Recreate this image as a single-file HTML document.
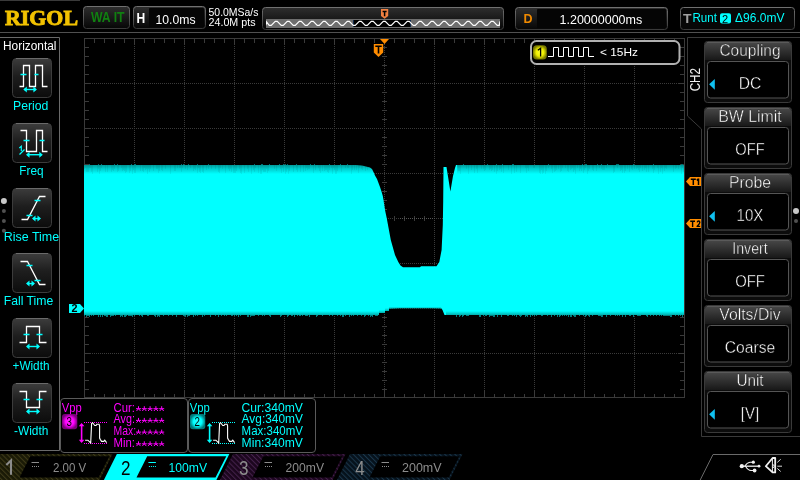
<!DOCTYPE html>
<html><head><meta charset="utf-8"><title>Rigol</title>
<style>
html,body{margin:0;padding:0;background:#000;}
body{width:800px;height:480px;overflow:hidden;position:relative;font-family:"Liberation Sans", sans-serif;}
svg{position:absolute;left:0;top:0;will-change:transform;}

</style></head><body>
<svg width="800" height="480" viewBox="0 0 800 480" font-family="Liberation Sans, sans-serif">
<defs>
<linearGradient id="btn" x1="0" y1="0" x2="0" y2="1">
<stop offset="0" stop-color="#3c3c3c"/><stop offset="0.45" stop-color="#1e1e1e"/><stop offset="1" stop-color="#0c0c0c"/></linearGradient>
<linearGradient id="mtitle" x1="0" y1="0" x2="0" y2="1">
<stop offset="0" stop-color="#484848"/><stop offset="1" stop-color="#181818"/></linearGradient>
<linearGradient id="topbox" x1="0" y1="0" x2="0" y2="1">
<stop offset="0" stop-color="#2e2e2e"/><stop offset="1" stop-color="#060606"/></linearGradient>
<linearGradient id="band" x1="0" y1="0" x2="0" y2="1">
<stop offset="0" stop-color="#000" stop-opacity="0.38"/><stop offset="0.4" stop-color="#000" stop-opacity="0.2"/><stop offset="1" stop-color="#000" stop-opacity="0"/></linearGradient>
<linearGradient id="bandb" x1="0" y1="1" x2="0" y2="0">
<stop offset="0" stop-color="#000" stop-opacity="0.32"/><stop offset="1" stop-color="#000" stop-opacity="0"/></linearGradient>
<pattern id="hatch1" width="3.6" height="3.6" patternUnits="userSpaceOnUse" patternTransform="rotate(-45)">
<rect width="3.6" height="3.6" fill="#1a1a06"/><rect width="1" height="3.6" fill="#403c1a"/></pattern>
<pattern id="hatch3" width="3.6" height="3.6" patternUnits="userSpaceOnUse" patternTransform="rotate(-45)">
<rect width="3.6" height="3.6" fill="#1c061e"/><rect width="1" height="3.6" fill="#44224c"/></pattern>
<pattern id="hatch4" width="3.6" height="3.6" patternUnits="userSpaceOnUse" patternTransform="rotate(-45)">
<rect width="3.6" height="3.6" fill="#06121c"/><rect width="1" height="3.6" fill="#1a364a"/></pattern>
<radialGradient id="rgm"><stop offset="0" stop-color="#ff30ff"/><stop offset="0.55" stop-color="#ff00ff"/><stop offset="1" stop-color="#7a007a"/></radialGradient>
<radialGradient id="rgc"><stop offset="0" stop-color="#30ffff"/><stop offset="0.55" stop-color="#00ffff"/><stop offset="1" stop-color="#007a7a"/></radialGradient>
<radialGradient id="rgy"><stop offset="0" stop-color="#ffff30"/><stop offset="0.55" stop-color="#f0f000"/><stop offset="1" stop-color="#7a7a00"/></radialGradient>
<filter id="glow" x="-50%" y="-50%" width="200%" height="200%"><feGaussianBlur stdDeviation="1.6"/></filter>
<linearGradient id="bord" x1="0" y1="0" x2="0" y2="1">
<stop offset="0" stop-color="#707070"/><stop offset="1" stop-color="#3a3a3a"/></linearGradient>
</defs>

<line x1="134.5" y1="40" x2="134.5" y2="397" stroke="#3a3a3a" stroke-width="1" stroke-dasharray="1 1"/>
<line x1="184.5" y1="40" x2="184.5" y2="397" stroke="#3a3a3a" stroke-width="1" stroke-dasharray="1 1"/>
<line x1="234.5" y1="40" x2="234.5" y2="397" stroke="#3a3a3a" stroke-width="1" stroke-dasharray="1 1"/>
<line x1="284.5" y1="40" x2="284.5" y2="397" stroke="#3a3a3a" stroke-width="1" stroke-dasharray="1 1"/>
<line x1="334.5" y1="40" x2="334.5" y2="397" stroke="#3a3a3a" stroke-width="1" stroke-dasharray="1 1"/>
<line x1="434.5" y1="40" x2="434.5" y2="397" stroke="#3a3a3a" stroke-width="1" stroke-dasharray="1 1"/>
<line x1="484.5" y1="40" x2="484.5" y2="397" stroke="#3a3a3a" stroke-width="1" stroke-dasharray="1 1"/>
<line x1="534.5" y1="40" x2="534.5" y2="397" stroke="#3a3a3a" stroke-width="1" stroke-dasharray="1 1"/>
<line x1="584.5" y1="40" x2="584.5" y2="397" stroke="#3a3a3a" stroke-width="1" stroke-dasharray="1 1"/>
<line x1="634.5" y1="40" x2="634.5" y2="397" stroke="#3a3a3a" stroke-width="1" stroke-dasharray="1 1"/>
<line x1="86" y1="83.5" x2="684" y2="83.5" stroke="#3a3a3a" stroke-width="1" stroke-dasharray="1 1"/>
<line x1="86" y1="128.5" x2="684" y2="128.5" stroke="#3a3a3a" stroke-width="1" stroke-dasharray="1 1"/>
<line x1="86" y1="173.5" x2="684" y2="173.5" stroke="#3a3a3a" stroke-width="1" stroke-dasharray="1 1"/>
<line x1="86" y1="263.5" x2="684" y2="263.5" stroke="#3a3a3a" stroke-width="1" stroke-dasharray="1 1"/>
<line x1="86" y1="308.5" x2="684" y2="308.5" stroke="#3a3a3a" stroke-width="1" stroke-dasharray="1 1"/>
<line x1="86" y1="353.5" x2="684" y2="353.5" stroke="#3a3a3a" stroke-width="1" stroke-dasharray="1 1"/>
<line x1="384.5" y1="40" x2="384.5" y2="397" stroke="#3a3a3a" stroke-width="1" stroke-dasharray="1 1"/>
<line x1="86" y1="218.5" x2="684" y2="218.5" stroke="#3a3a3a" stroke-width="1" stroke-dasharray="1 1"/>
<path d="M94.5 39V43M94.5 397V394M94.5 216V221M104.5 39V43M104.5 397V394M104.5 216V221M114.5 39V43M114.5 397V394M114.5 216V221M124.5 39V43M124.5 397V394M124.5 216V221M144.5 39V43M144.5 397V394M144.5 216V221M154.5 39V43M154.5 397V394M154.5 216V221M164.5 39V43M164.5 397V394M164.5 216V221M174.5 39V43M174.5 397V394M174.5 216V221M194.5 39V43M194.5 397V394M194.5 216V221M204.5 39V43M204.5 397V394M204.5 216V221M214.5 39V43M214.5 397V394M214.5 216V221M224.5 39V43M224.5 397V394M224.5 216V221M244.5 39V43M244.5 397V394M244.5 216V221M254.5 39V43M254.5 397V394M254.5 216V221M264.5 39V43M264.5 397V394M264.5 216V221M274.5 39V43M274.5 397V394M274.5 216V221M294.5 39V43M294.5 397V394M294.5 216V221M304.5 39V43M304.5 397V394M304.5 216V221M314.5 39V43M314.5 397V394M314.5 216V221M324.5 39V43M324.5 397V394M324.5 216V221M344.5 39V43M344.5 397V394M344.5 216V221M354.5 39V43M354.5 397V394M354.5 216V221M364.5 39V43M364.5 397V394M364.5 216V221M374.5 39V43M374.5 397V394M374.5 216V221M394.5 39V43M394.5 397V394M394.5 216V221M404.5 39V43M404.5 397V394M404.5 216V221M414.5 39V43M414.5 397V394M414.5 216V221M424.5 39V43M424.5 397V394M424.5 216V221M444.5 39V43M444.5 397V394M444.5 216V221M454.5 39V43M454.5 397V394M454.5 216V221M464.5 39V43M464.5 397V394M464.5 216V221M474.5 39V43M474.5 397V394M474.5 216V221M494.5 39V43M494.5 397V394M494.5 216V221M504.5 39V43M504.5 397V394M504.5 216V221M514.5 39V43M514.5 397V394M514.5 216V221M524.5 39V43M524.5 397V394M524.5 216V221M544.5 39V43M544.5 397V394M544.5 216V221M554.5 39V43M554.5 397V394M554.5 216V221M564.5 39V43M564.5 397V394M564.5 216V221M574.5 39V43M574.5 397V394M574.5 216V221M594.5 39V43M594.5 397V394M594.5 216V221M604.5 39V43M604.5 397V394M604.5 216V221M614.5 39V43M614.5 397V394M614.5 216V221M624.5 39V43M624.5 397V394M624.5 216V221M644.5 39V43M644.5 397V394M644.5 216V221M654.5 39V43M654.5 397V394M654.5 216V221M664.5 39V43M664.5 397V394M664.5 216V221M674.5 39V43M674.5 397V394M674.5 216V221M85 47.5H89M684 47.5H680M382 47.5H387M85 56.5H89M684 56.5H680M382 56.5H387M85 65.5H89M684 65.5H680M382 65.5H387M85 74.5H89M684 74.5H680M382 74.5H387M85 92.5H89M684 92.5H680M382 92.5H387M85 101.5H89M684 101.5H680M382 101.5H387M85 110.5H89M684 110.5H680M382 110.5H387M85 119.5H89M684 119.5H680M382 119.5H387M85 137.5H89M684 137.5H680M382 137.5H387M85 146.5H89M684 146.5H680M382 146.5H387M85 155.5H89M684 155.5H680M382 155.5H387M85 164.5H89M684 164.5H680M382 164.5H387M85 182.5H89M684 182.5H680M382 182.5H387M85 191.5H89M684 191.5H680M382 191.5H387M85 200.5H89M684 200.5H680M382 200.5H387M85 209.5H89M684 209.5H680M382 209.5H387M85 227.5H89M684 227.5H680M382 227.5H387M85 236.5H89M684 236.5H680M382 236.5H387M85 245.5H89M684 245.5H680M382 245.5H387M85 254.5H89M684 254.5H680M382 254.5H387M85 272.5H89M684 272.5H680M382 272.5H387M85 281.5H89M684 281.5H680M382 281.5H387M85 290.5H89M684 290.5H680M382 290.5H387M85 299.5H89M684 299.5H680M382 299.5H387M85 317.5H89M684 317.5H680M382 317.5H387M85 326.5H89M684 326.5H680M382 326.5H387M85 335.5H89M684 335.5H680M382 335.5H387M85 344.5H89M684 344.5H680M382 344.5H387M85 362.5H89M684 362.5H680M382 362.5H387M85 371.5H89M684 371.5H680M382 371.5H387M85 380.5H89M684 380.5H680M382 380.5H387M85 389.5H89M684 389.5H680M382 389.5H387M134.5 39V45M134.5 397V391M184.5 39V45M184.5 397V391M234.5 39V45M234.5 397V391M284.5 39V45M284.5 397V391M334.5 39V45M334.5 397V391M384.5 39V45M384.5 397V391M434.5 39V45M434.5 397V391M484.5 39V45M484.5 397V391M534.5 39V45M534.5 397V391M584.5 39V45M584.5 397V391M634.5 39V45M634.5 397V391M85 83.5H91M684 83.5H678M85 128.5H91M684 128.5H678M85 173.5H91M684 173.5H678M85 218.5H91M684 218.5H678M85 263.5H91M684 263.5H678M85 308.5H91M684 308.5H678M85 353.5H91M684 353.5H678" stroke="#3a3a3a" stroke-width="1" fill="none"/>
<rect x="84.5" y="38.5" width="600" height="359" fill="none" stroke="#3a3a3a" stroke-width="1"/>
<path d="M84 165 L356 165 L362 165.5 L366 166.5 L370 167.5 L372 169 L373.5 172 L375 175.5 L377 179 L378.5 183 L380 187 L381.5 191.5 L382.8 196 L383.5 200 L385 210 L386.7 218 L390.8 240 L395 255 L398.3 262 L400.5 265.5 L403 267.3 L420 267.3 L421 266.2 L436.5 266.2 L439.3 262 L441.6 250 L442.8 225 L443.2 201 L443.5 167 L446.5 167 L450.4 191.5 L452 182 L453 176 L455 168 L456 165 L684 165 L684 315 L444.5 315 L442.5 310 L441.5 308.4 L430 308.2 L400 308.2 L389 308.8 L389 311 L385 311 L385 313 L379 313 L379 315 L84 315Z" fill="#00ffff"/>
<rect x="84" y="165" width="290" height="9" fill="url(#band)"/>
<rect x="457" y="165" width="227" height="9" fill="url(#band)"/>
<path d="M84 165h1v4h-1zM85 165h1v3h-1zM86 165h1v7h-1zM87 165h1v7h-1zM88 165h1v7h-1zM89 165h1v3h-1zM90 165h1v3h-1zM91 165h1v7h-1zM92 165h1v9h-1zM97 165h1v7h-1zM98 165h1v4h-1zM99 165h1v9h-1zM100 165h1v6h-1zM101 165h1v3h-1zM105 165h1v7h-1zM107 165h1v7h-1zM111 165h1v7h-1zM112 165h1v5h-1zM113 165h1v6h-1zM114 165h1v4h-1zM117 165h1v7h-1zM118 165h1v6h-1zM121 165h1v3h-1zM122 165h1v6h-1zM123 165h1v5h-1zM124 165h1v6h-1zM125 165h1v8h-1zM126 165h1v7h-1zM129 165h1v8h-1zM130 165h1v6h-1zM132 165h1v9h-1zM133 165h1v5h-1zM134 165h1v8h-1zM135 165h1v8h-1zM140 165h1v6h-1zM142 165h1v6h-1zM143 165h1v7h-1zM144 165h1v3h-1zM145 165h1v5h-1zM146 165h1v4h-1zM147 165h1v9h-1zM148 165h1v4h-1zM149 165h1v7h-1zM150 165h1v4h-1zM153 165h1v6h-1zM156 165h1v4h-1zM157 165h1v4h-1zM158 165h1v8h-1zM159 165h1v6h-1zM161 165h1v5h-1zM162 165h1v6h-1zM165 165h1v4h-1zM170 165h1v9h-1zM174 165h1v6h-1zM175 165h1v6h-1zM177 165h1v3h-1zM179 165h1v3h-1zM180 165h1v3h-1zM181 165h1v7h-1zM182 165h1v3h-1zM185 165h1v4h-1zM187 165h1v5h-1zM190 165h1v3h-1zM193 165h1v6h-1zM194 165h1v4h-1zM195 165h1v5h-1zM197 165h1v8h-1zM198 165h1v3h-1zM199 165h1v7h-1zM200 165h1v8h-1zM202 165h1v7h-1zM203 165h1v8h-1zM206 165h1v5h-1zM208 165h1v4h-1zM211 165h1v4h-1zM215 165h1v4h-1zM218 165h1v7h-1zM219 165h1v8h-1zM220 165h1v3h-1zM222 165h1v4h-1zM225 165h1v8h-1zM228 165h1v4h-1zM229 165h1v6h-1zM230 165h1v4h-1zM231 165h1v7h-1zM233 165h1v8h-1zM234 165h1v8h-1zM235 165h1v8h-1zM236 165h1v6h-1zM239 165h1v4h-1zM240 165h1v8h-1zM241 165h1v9h-1zM244 165h1v8h-1zM247 165h1v4h-1zM248 165h1v7h-1zM251 165h1v9h-1zM253 165h1v5h-1zM254 165h1v7h-1zM255 165h1v3h-1zM258 165h1v8h-1zM260 165h1v9h-1zM261 165h1v9h-1zM262 165h1v5h-1zM263 165h1v7h-1zM264 165h1v7h-1zM265 165h1v7h-1zM266 165h1v4h-1zM267 165h1v8h-1zM268 165h1v6h-1zM274 165h1v4h-1zM276 165h1v6h-1zM280 165h1v4h-1zM281 165h1v8h-1zM282 165h1v3h-1zM283 165h1v7h-1zM285 165h1v9h-1zM286 165h1v7h-1zM287 165h1v4h-1zM288 165h1v9h-1zM289 165h1v6h-1zM293 165h1v7h-1zM296 165h1v5h-1zM297 165h1v7h-1zM300 165h1v7h-1zM303 165h1v7h-1zM305 165h1v6h-1zM306 165h1v3h-1zM307 165h1v5h-1zM308 165h1v4h-1zM309 165h1v4h-1zM313 165h1v8h-1zM315 165h1v5h-1zM318 165h1v3h-1zM319 165h1v6h-1zM320 165h1v8h-1zM322 165h1v6h-1zM324 165h1v6h-1zM325 165h1v5h-1zM326 165h1v5h-1zM327 165h1v7h-1zM328 165h1v8h-1zM329 165h1v5h-1zM331 165h1v3h-1zM332 165h1v9h-1zM333 165h1v3h-1zM334 165h1v5h-1zM335 165h1v9h-1zM336 165h1v9h-1zM337 165h1v6h-1zM341 165h1v7h-1zM345 165h1v3h-1zM347 165h1v3h-1zM348 165h1v3h-1zM351 165h1v9h-1zM352 165h1v5h-1zM354 165h1v5h-1zM356 165h1v5h-1zM358 165h1v8h-1zM359 165h1v3h-1zM361 165h1v4h-1zM362 165h1v5h-1zM365 165h1v6h-1zM367 165h1v5h-1zM370 165h1v3h-1zM458 165h1v6h-1zM459 165h1v6h-1zM460 165h1v9h-1zM466 165h1v4h-1zM468 165h1v9h-1zM471 165h1v5h-1zM474 165h1v8h-1zM476 165h1v4h-1zM477 165h1v8h-1zM481 165h1v4h-1zM483 165h1v4h-1zM484 165h1v6h-1zM485 165h1v5h-1zM489 165h1v5h-1zM490 165h1v4h-1zM491 165h1v6h-1zM492 165h1v5h-1zM494 165h1v7h-1zM496 165h1v9h-1zM497 165h1v6h-1zM499 165h1v5h-1zM500 165h1v4h-1zM501 165h1v7h-1zM503 165h1v8h-1zM508 165h1v5h-1zM511 165h1v9h-1zM514 165h1v8h-1zM516 165h1v7h-1zM520 165h1v8h-1zM525 165h1v3h-1zM526 165h1v8h-1zM527 165h1v3h-1zM528 165h1v6h-1zM533 165h1v3h-1zM534 165h1v3h-1zM539 165h1v8h-1zM540 165h1v9h-1zM541 165h1v5h-1zM542 165h1v9h-1zM543 165h1v8h-1zM545 165h1v9h-1zM546 165h1v6h-1zM548 165h1v3h-1zM551 165h1v4h-1zM552 165h1v8h-1zM554 165h1v7h-1zM555 165h1v6h-1zM556 165h1v5h-1zM558 165h1v4h-1zM560 165h1v7h-1zM561 165h1v6h-1zM562 165h1v3h-1zM565 165h1v3h-1zM567 165h1v6h-1zM568 165h1v7h-1zM570 165h1v5h-1zM571 165h1v4h-1zM572 165h1v3h-1zM573 165h1v7h-1zM574 165h1v5h-1zM575 165h1v9h-1zM577 165h1v3h-1zM579 165h1v6h-1zM580 165h1v4h-1zM581 165h1v6h-1zM583 165h1v8h-1zM584 165h1v5h-1zM585 165h1v3h-1zM587 165h1v9h-1zM588 165h1v6h-1zM589 165h1v4h-1zM592 165h1v5h-1zM593 165h1v6h-1zM596 165h1v6h-1zM599 165h1v3h-1zM601 165h1v4h-1zM602 165h1v5h-1zM603 165h1v5h-1zM604 165h1v5h-1zM606 165h1v3h-1zM613 165h1v8h-1zM614 165h1v7h-1zM617 165h1v3h-1zM620 165h1v6h-1zM621 165h1v5h-1zM622 165h1v8h-1zM624 165h1v8h-1zM625 165h1v6h-1zM627 165h1v4h-1zM629 165h1v7h-1zM631 165h1v4h-1zM632 165h1v5h-1zM634 165h1v4h-1zM636 165h1v4h-1zM637 165h1v3h-1zM638 165h1v5h-1zM639 165h1v7h-1zM640 165h1v3h-1zM642 165h1v6h-1zM644 165h1v5h-1zM645 165h1v3h-1zM646 165h1v7h-1zM648 165h1v7h-1zM652 165h1v4h-1zM653 165h1v8h-1zM654 165h1v5h-1zM657 165h1v3h-1zM658 165h1v9h-1zM660 165h1v7h-1zM661 165h1v3h-1zM662 165h1v9h-1zM664 165h1v6h-1zM665 165h1v3h-1zM666 165h1v4h-1zM673 165h1v7h-1zM675 165h1v4h-1zM676 165h1v3h-1zM678 165h1v4h-1zM681 165h1v9h-1zM682 165h1v3h-1zM683 165h1v7h-1z" fill="#000" fill-opacity="0.06"/>
<path d="M89 164h1v1h-1zM98 164h1v1h-1zM101 164h1v1h-1zM114 164h1v1h-1zM117 164h1v1h-1zM131 164h1v1h-1zM134 164h1v1h-1zM135 164h1v1h-1zM181 164h1v1h-1zM183 164h1v1h-1zM188 164h1v1h-1zM197 164h1v1h-1zM208 164h1v1h-1zM254 164h1v1h-1zM261 164h1v1h-1zM262 164h1v1h-1zM269 164h1v1h-1zM279 164h1v1h-1zM283 164h1v1h-1zM285 164h1v1h-1zM287 164h1v1h-1zM296 164h1v1h-1zM310 164h1v1h-1zM314 164h1v1h-1zM329 164h1v1h-1zM340 164h1v1h-1zM347 164h1v1h-1zM463 164h1v1h-1zM487 164h1v1h-1zM496 164h1v1h-1zM502 164h1v1h-1zM512 164h1v1h-1zM513 164h1v1h-1zM548 164h1v1h-1zM582 164h1v1h-1zM585 164h1v1h-1zM586 164h1v1h-1zM597 164h1v1h-1zM601 164h1v1h-1zM607 164h1v1h-1zM616 164h1v1h-1zM617 164h1v1h-1zM618 164h1v1h-1zM633 164h1v1h-1zM653 164h1v1h-1zM681 164h1v1h-1zM682 164h1v1h-1z" fill="#007070"/>
<path d="M84 315h1v1h-1zM86 315h1v2h-1zM87 315h1v1h-1zM88 315h1v1h-1zM89 315h1v2h-1zM91 315h1v1h-1zM93 315h1v1h-1zM98 315h1v2h-1zM100 315h1v2h-1zM102 315h1v2h-1zM104 315h1v1h-1zM105 315h1v1h-1zM106 315h1v2h-1zM107 315h1v2h-1zM110 315h1v2h-1zM111 315h1v1h-1zM112 315h1v1h-1zM113 315h1v1h-1zM115 315h1v1h-1zM120 315h1v2h-1zM121 315h1v1h-1zM122 315h1v2h-1zM124 315h1v2h-1zM125 315h1v2h-1zM126 315h1v1h-1zM128 315h1v1h-1zM129 315h1v1h-1zM130 315h1v1h-1zM131 315h1v1h-1zM132 315h1v2h-1zM134 315h1v1h-1zM139 315h1v1h-1zM141 315h1v1h-1zM142 315h1v2h-1zM147 315h1v1h-1zM148 315h1v1h-1zM154 315h1v1h-1zM155 315h1v2h-1zM157 315h1v2h-1zM158 315h1v1h-1zM159 315h1v2h-1zM163 315h1v1h-1zM168 315h1v1h-1zM172 315h1v1h-1zM176 315h1v2h-1zM183 315h1v1h-1zM184 315h1v1h-1zM185 315h1v2h-1zM187 315h1v2h-1zM188 315h1v1h-1zM189 315h1v1h-1zM193 315h1v2h-1zM195 315h1v1h-1zM197 315h1v1h-1zM202 315h1v2h-1zM204 315h1v1h-1zM210 315h1v2h-1zM215 315h1v1h-1zM218 315h1v2h-1zM221 315h1v1h-1zM224 315h1v1h-1zM226 315h1v1h-1zM231 315h1v1h-1zM232 315h1v1h-1zM234 315h1v1h-1zM236 315h1v1h-1zM238 315h1v2h-1zM240 315h1v1h-1zM247 315h1v2h-1zM248 315h1v2h-1zM250 315h1v2h-1zM251 315h1v1h-1zM252 315h1v1h-1zM253 315h1v1h-1zM254 315h1v1h-1zM258 315h1v1h-1zM262 315h1v1h-1zM264 315h1v1h-1zM269 315h1v1h-1zM270 315h1v2h-1zM280 315h1v2h-1zM281 315h1v1h-1zM287 315h1v2h-1zM288 315h1v1h-1zM291 315h1v1h-1zM292 315h1v1h-1zM294 315h1v2h-1zM297 315h1v1h-1zM299 315h1v1h-1zM300 315h1v1h-1zM302 315h1v1h-1zM305 315h1v1h-1zM306 315h1v1h-1zM307 315h1v1h-1zM309 315h1v2h-1zM316 315h1v2h-1zM317 315h1v1h-1zM322 315h1v1h-1zM329 315h1v1h-1zM332 315h1v1h-1zM337 315h1v1h-1zM340 315h1v1h-1zM342 315h1v2h-1zM343 315h1v2h-1zM345 315h1v1h-1zM349 315h1v2h-1zM351 315h1v1h-1zM353 315h1v1h-1zM357 315h1v1h-1zM361 315h1v1h-1zM364 315h1v2h-1zM365 315h1v1h-1zM368 315h1v1h-1zM370 315h1v2h-1zM371 315h1v1h-1zM372 315h1v2h-1zM375 315h1v1h-1zM376 315h1v1h-1zM377 315h1v1h-1zM456 315h1v2h-1zM459 315h1v2h-1zM460 315h1v1h-1zM462 315h1v2h-1zM463 315h1v1h-1zM466 315h1v1h-1zM467 315h1v1h-1zM468 315h1v1h-1zM479 315h1v2h-1zM480 315h1v2h-1zM483 315h1v1h-1zM485 315h1v1h-1zM486 315h1v1h-1zM489 315h1v2h-1zM490 315h1v1h-1zM491 315h1v1h-1zM492 315h1v1h-1zM493 315h1v2h-1zM494 315h1v2h-1zM497 315h1v2h-1zM501 315h1v2h-1zM507 315h1v1h-1zM508 315h1v1h-1zM512 315h1v1h-1zM514 315h1v1h-1zM516 315h1v2h-1zM519 315h1v1h-1zM520 315h1v2h-1zM521 315h1v1h-1zM525 315h1v2h-1zM526 315h1v1h-1zM527 315h1v2h-1zM530 315h1v2h-1zM532 315h1v1h-1zM534 315h1v1h-1zM536 315h1v1h-1zM541 315h1v1h-1zM542 315h1v1h-1zM547 315h1v1h-1zM551 315h1v2h-1zM554 315h1v1h-1zM557 315h1v2h-1zM559 315h1v2h-1zM560 315h1v1h-1zM562 315h1v1h-1zM564 315h1v1h-1zM566 315h1v1h-1zM568 315h1v2h-1zM570 315h1v2h-1zM571 315h1v2h-1zM573 315h1v1h-1zM574 315h1v2h-1zM575 315h1v2h-1zM579 315h1v1h-1zM583 315h1v1h-1zM585 315h1v2h-1zM586 315h1v1h-1zM588 315h1v1h-1zM589 315h1v2h-1zM592 315h1v1h-1zM598 315h1v1h-1zM599 315h1v1h-1zM600 315h1v1h-1zM601 315h1v2h-1zM602 315h1v2h-1zM606 315h1v2h-1zM610 315h1v1h-1zM615 315h1v1h-1zM617 315h1v1h-1zM619 315h1v1h-1zM622 315h1v2h-1zM625 315h1v2h-1zM629 315h1v1h-1zM630 315h1v1h-1zM633 315h1v2h-1zM637 315h1v1h-1zM638 315h1v1h-1zM639 315h1v1h-1zM640 315h1v1h-1zM646 315h1v1h-1zM647 315h1v2h-1zM650 315h1v1h-1zM653 315h1v1h-1zM656 315h1v1h-1zM659 315h1v1h-1zM661 315h1v1h-1zM663 315h1v1h-1zM664 315h1v1h-1zM665 315h1v1h-1zM666 315h1v1h-1zM667 315h1v1h-1zM668 315h1v1h-1zM669 315h1v1h-1zM670 315h1v2h-1zM671 315h1v2h-1zM675 315h1v1h-1zM678 315h1v1h-1zM680 315h1v1h-1zM682 315h1v2h-1z" fill="#008080"/>
<rect x="84" y="311" width="295" height="4" fill="url(#bandb)"/>
<rect x="379" y="310" width="6" height="3" fill="url(#bandb)"/><rect x="385" y="308" width="4" height="3" fill="url(#bandb)"/><rect x="389" y="306.5" width="52" height="2.3" fill="url(#bandb)"/>
<rect x="446" y="311" width="238" height="4" fill="url(#bandb)"/>
<line x1="400" y1="218.5" x2="436" y2="218.5" stroke="#555" stroke-dasharray="1 1"/>
<line x1="0" y1="32.5" x2="800" y2="32.5" stroke="#505050" stroke-width="1"/>
<line x1="0" y1="0.5" x2="80" y2="0.5" stroke="#3a3a3a" stroke-width="1"/>
<text x="5" y="25" font-family="Liberation Serif" font-weight="bold" font-size="22" fill="#f2c200" stroke="#f2c200" stroke-width="0.9" textLength="73" lengthAdjust="spacingAndGlyphs">RIGOL</text>
<rect x="83.5" y="6.5" width="46" height="22" rx="3" fill="url(#topbox)" stroke="url(#bord)"/>
<text x="91" y="22.4" font-weight="bold" font-size="14.5" fill="#108010" textLength="33.5" lengthAdjust="spacingAndGlyphs">WA IT</text>
<rect x="133.5" y="6.5" width="72" height="22" rx="3" fill="url(#topbox)" stroke="url(#bord)"/>
<rect x="149" y="8" width="55" height="19" rx="1" fill="#050505"/>
<text x="136.5" y="22.9" font-weight="bold" font-size="14.3" fill="#fff" textLength="8.7" lengthAdjust="spacingAndGlyphs">H</text>
<text x="155.5" y="24" font-size="12.5" fill="#fff" textLength="40" lengthAdjust="spacingAndGlyphs">10.0ms</text>
<text x="208.5" y="15.8" font-size="10.5" fill="#fff" textLength="50" lengthAdjust="spacingAndGlyphs">50.0MSa/s</text>
<text x="208.5" y="26.2" font-size="10.5" fill="#fff" textLength="47" lengthAdjust="spacingAndGlyphs">24.0M pts</text>
<rect x="262.5" y="7.5" width="241" height="22" rx="3" fill="url(#topbox)" stroke="url(#bord)"/>
<rect x="266" y="19" width="234" height="9" fill="#6e6e6e"/>
<rect x="353" y="20" width="58" height="7" fill="#000"/>
<path d="M353.5 20V27M410.5 20V27" stroke="#102848" stroke-width="1"/>
<svg x="266" y="19" width="234" height="9" viewBox="266 19 234 9"><polyline points="266.00,25.3 266.00,25.3 266.00,21.3 266.00,21.3 269.25,25.3 271.25,25.3 275.25,21.3 277.25,21.3 281.25,25.3 283.25,25.3 287.25,21.3 289.25,21.3 293.25,25.3 295.25,25.3 299.25,21.3 301.25,21.3 305.25,25.3 307.25,25.3 311.25,21.3 313.25,21.3 317.25,25.3 319.25,25.3 323.25,21.3 325.25,21.3 329.25,25.3 331.25,25.3 335.25,21.3 337.25,21.3 341.25,25.3 343.25,25.3 347.25,21.3 349.25,21.3 353.25,25.3 355.25,25.3 359.25,21.3 361.25,21.3 365.25,25.3 367.25,25.3 371.25,21.3 373.25,21.3 377.25,25.3 379.25,25.3 383.25,21.3 385.25,21.3 389.25,25.3 391.25,25.3 395.25,21.3 397.25,21.3 401.25,25.3 403.25,25.3 407.25,21.3 409.25,21.3 413.25,25.3 415.25,25.3 419.25,21.3 421.25,21.3 425.25,25.3 427.25,25.3 431.25,21.3 433.25,21.3 437.25,25.3 439.25,25.3 443.25,21.3 445.25,21.3 449.25,25.3 451.25,25.3 455.25,21.3 457.25,21.3 461.25,25.3 463.25,25.3 467.25,21.3 469.25,21.3 473.25,25.3 475.25,25.3 479.25,21.3 481.25,21.3 485.25,25.3 487.25,25.3 491.25,21.3 493.25,21.3 497.25,25.3 499.25,25.3 500.00,21.3 500.00,21.3 500.00,25.3 500.00,25.3 500.00,21.3 500.00,21.3" fill="none" stroke="#fff" stroke-width="1.2"/></svg>
<path d="M381 9H388.2V16L384.6 18.8L381 16Z" fill="#f08040"/>
<path d="M382.6 11.6H386.6M384.6 11.6V16.3" stroke="#000" stroke-width="1.5"/>
<rect x="515.5" y="7.5" width="152" height="22" rx="3" fill="url(#topbox)" stroke="url(#bord)"/>
<rect x="537" y="9" width="129" height="19" rx="1" fill="#050505"/>
<text x="523.5" y="22.5" font-weight="bold" font-size="12.5" fill="#f08a00">D</text>
<text x="559.5" y="23.5" font-size="12.5" fill="#fff" textLength="82.7" lengthAdjust="spacingAndGlyphs">1.20000000ms</text>
<rect x="680.5" y="7.5" width="114" height="22" rx="3" fill="#070707" stroke="url(#bord)"/>
<text x="683" y="22.6" font-weight="bold" font-size="13.5" fill="#a0a0a0" textLength="8.5" lengthAdjust="spacingAndGlyphs">T</text>
<text x="692.5" y="22" font-size="12" fill="#00ffff" textLength="24.5" lengthAdjust="spacingAndGlyphs">Runt</text>
<rect x="720" y="13.3" width="11" height="10.3" rx="2" fill="#00ffff"/>
<text x="722" y="22.6" font-size="11" fill="#000">2</text>
<text x="735" y="22" font-size="12" fill="#00ffff" textLength="49.5" lengthAdjust="spacingAndGlyphs">Δ96.0mV</text>
<path d="M380 39H389L384.5 44Z" fill="#ff8c00"/>
<path d="M373.8 44H383.2V52.6L378.5 57L373.8 52.6Z" fill="#ff8c00"/>
<path d="M375.3 46.3H381.7M378.5 46.3V53.5" stroke="#000" stroke-width="1.6"/>
<rect x="531" y="41" width="148.5" height="23" rx="5.5" fill="#000" stroke="#b0b0b0" stroke-width="2"/>
<rect x="533" y="45.3" width="13.8" height="14.2" rx="4" fill="url(#rgy)"/>
<path d="M537.8 50.3L540.6 48.2V56.4" stroke="#000" stroke-width="1.3" fill="none"/>
<path d="M548 56.5H553.5V47.5H558.5V56.5H563.5V47.5H568.5V56.5H573.5V47.5H578.5V56.5H583.5V47.5H588.5V56.5H594" fill="none" stroke="#fff" stroke-width="1"/>
<text x="600" y="55.6" font-size="11.5" fill="#fff" textLength="38" lengthAdjust="spacingAndGlyphs">&lt; 15Hz</text>
<path d="M69 304H80L84 308.5L80 313H69Z" fill="#00ffff"/>
<text x="71.6" y="312.2" font-size="10.5" font-weight="bold" fill="#000" textLength="6" lengthAdjust="spacingAndGlyphs">2</text>
<path d="M690 177H701V186H690L686 181.5Z" fill="#ff8c00"/>
<path d="M690.8 179.3H695.8M693.3 179.3V185M698.5 178.6V185M696.8 180.4L698.5 178.8" stroke="#000" stroke-width="1.5" fill="none"/>
<path d="M690 219H701V228H690L686 223.5Z" fill="#ff8c00"/>
<path d="M690.2 221.3H695M692.6 221.3V227M697.2 222.3Q697.5 221 698.5 221Q699.8 221 699.8 222.5Q699.8 223.8 697.2 226.2V226.4H700.2" stroke="#000" stroke-width="1.4" fill="none"/>
<path d="M0 37.5H59.5V450.5H0" fill="none" stroke="#6a6a6a" stroke-width="1"/>
<text x="3" y="49.7" font-size="12" fill="#fff" textLength="53.5" lengthAdjust="spacingAndGlyphs">Horizontal</text>
<rect x="12.5" y="58.5" width="39" height="39" rx="4" fill="url(#btn)" stroke="#3c3c3c"/>
<path d="M16 58.5H48" stroke="#6a6a6a" stroke-width="1"/>
<text x="30.7" y="109.7" font-size="12.3" fill="#00ffff" text-anchor="middle" textLength="35.4" lengthAdjust="spacingAndGlyphs">Period</text>
<rect x="12.5" y="123.5" width="39" height="39" rx="4" fill="url(#btn)" stroke="#3c3c3c"/>
<path d="M16 123.5H48" stroke="#6a6a6a" stroke-width="1"/>
<text x="31.4" y="174.5" font-size="12.3" fill="#00ffff" text-anchor="middle" textLength="24.2" lengthAdjust="spacingAndGlyphs">Freq</text>
<rect x="12.5" y="188.5" width="39" height="39" rx="4" fill="url(#btn)" stroke="#3c3c3c"/>
<path d="M16 188.5H48" stroke="#6a6a6a" stroke-width="1"/>
<text x="3.7" y="240.6" font-size="12.3" fill="#00ffff" text-anchor="start" textLength="55.5" lengthAdjust="spacingAndGlyphs">Rise Time</text>
<rect x="12.5" y="253.5" width="39" height="39" rx="4" fill="url(#btn)" stroke="#3c3c3c"/>
<path d="M16 253.5H48" stroke="#6a6a6a" stroke-width="1"/>
<text x="3.7" y="305.4" font-size="12.3" fill="#00ffff" text-anchor="start" textLength="49.6" lengthAdjust="spacingAndGlyphs">Fall Time</text>
<rect x="12.5" y="318.5" width="39" height="39" rx="4" fill="url(#btn)" stroke="#3c3c3c"/>
<path d="M16 318.5H48" stroke="#6a6a6a" stroke-width="1"/>
<text x="31" y="370" font-size="12.3" fill="#00ffff" text-anchor="middle" textLength="37" lengthAdjust="spacingAndGlyphs">+Width</text>
<rect x="12.5" y="383.5" width="39" height="39" rx="4" fill="url(#btn)" stroke="#3c3c3c"/>
<path d="M16 383.5H48" stroke="#6a6a6a" stroke-width="1"/>
<text x="31.2" y="434.5" font-size="12.3" fill="#00ffff" text-anchor="middle" textLength="34.4" lengthAdjust="spacingAndGlyphs">-Width</text>
<path d="M19.5 86.5H23.5V65.5H29.5V86.5H35.5V65.5H42.5V86.5H47.5" stroke="#fff" stroke-width="1.3" fill="none"/>
<path d="M20.5 74.5H26.5M34.5 74.5H38.5" stroke="#00ffff" stroke-width="1.3"/><path d="M24.3 89.5H35.9" stroke="#00ffff" stroke-width="1.4"/><path d="M23.3 89.5L26.8 86.5V92.5Z M36.9 89.5L33.4 86.5V92.5Z" fill="#00ffff"/>
<path d="M20.5 130.5H26.5V151.5H36.5V130.5H42.5V151.5H47.5" stroke="#fff" stroke-width="1.3" fill="none"/>
<path d="M23.5 140.5H29.5M39.5 140.5H44.5M19.5 154.5L24.5 149.5" stroke="#00ffff" stroke-width="1.3"/><path d="M27 154.7H41.8" stroke="#00ffff" stroke-width="1.4"/><path d="M26 154.7L29.5 151.7V157.7Z M42.8 154.7L39.3 151.7V157.7Z" fill="#00ffff"/>
<path d="M19.3 148L21.3 146.3V151" stroke="#00ffff" stroke-width="1.2" fill="none"/>
<path d="M21.5 219.5H27.5L39.5 196.5H45.5" stroke="#fff" stroke-width="1.3" fill="none"/>
<path d="M34.5 200.5H40.5M26.5 215.5H32.5" stroke="#00ffff" stroke-width="1.3"/><path d="M33 218.6H40" stroke="#00ffff" stroke-width="1.4"/><path d="M32 218.6L35.5 215.6V221.6Z M41 218.6L37.5 215.6V221.6Z" fill="#00ffff"/>
<path d="M20.5 261.5H27.5L39.5 284.5H45.5" stroke="#fff" stroke-width="1.3" fill="none"/>
<path d="M26.5 265.5H32.5M34.5 280.5H40.5" stroke="#00ffff" stroke-width="1.3"/><path d="M27 283.6H34" stroke="#00ffff" stroke-width="1.4"/><path d="M26 283.6L29.5 280.6V286.6Z M35 283.6L31.5 280.6V286.6Z" fill="#00ffff"/>
<path d="M19.5 342.5H26.5V326.5H39.5V342.5H46.5" stroke="#fff" stroke-width="1.3" fill="none"/>
<path d="M23.5 334.5H29.5M36.5 334.5H42.5" stroke="#00ffff" stroke-width="1.3"/><path d="M27 346.5H39" stroke="#00ffff" stroke-width="1.4"/><path d="M26 346.5L29.5 343.5V349.5Z M40 346.5L36.5 343.5V349.5Z" fill="#00ffff"/>
<path d="M19.5 391.5H26.5V407.5H39.5V391.5H46.5" stroke="#fff" stroke-width="1.3" fill="none"/>
<path d="M23.5 399.5H29.5M36.5 399.5H42.5" stroke="#00ffff" stroke-width="1.3"/><path d="M27 411.5H39" stroke="#00ffff" stroke-width="1.4"/><path d="M26 411.5L29.5 408.5V414.5Z M40 411.5L36.5 408.5V414.5Z" fill="#00ffff"/>
<circle cx="3.9" cy="201" r="3" fill="#c8c8c8"/>
<circle cx="3.9" cy="211" r="2" fill="#505050"/>
<circle cx="3.9" cy="220.9" r="2" fill="#505050"/>
<circle cx="3.9" cy="230.8" r="2" fill="#505050"/>
<path d="M800 37.5H687.5V116L701.5 129V436.5H800" fill="none" stroke="#3a3a3a" stroke-width="1"/>
<text transform="translate(699.8 91.3) rotate(-90)" font-size="14.5" fill="#f0f0f0" textLength="23.3" lengthAdjust="spacingAndGlyphs">CH2</text>
<rect x="704.5" y="41.5" width="87" height="61" rx="3" fill="#0c0c0c" stroke="#3a3a3a"/>
<path d="M705 45Q705 42 708 42H788Q791 42 791 45V60H705Z" fill="url(#mtitle)"/>
<path d="M707 42.5H789" stroke="#5a5a5a" stroke-width="1"/>
<rect x="707.5" y="61.5" width="81" height="36.5" rx="3" fill="#000" stroke="#555"/>
<text x="750" y="55.5" font-size="16.5" fill="#ffffff" stroke="#1c1c1c" stroke-width="0.4" text-anchor="middle" textLength="61.1" lengthAdjust="spacingAndGlyphs">Coupling</text>
<text x="750" y="88.8" font-size="16.3" fill="#ffffff" stroke="#000" stroke-width="0.4" text-anchor="middle" textLength="22.6" lengthAdjust="spacingAndGlyphs">DC</text>
<path d="M709.1 84.3L714.8 78.9V89.7Z" fill="#10c0f0"/>
<rect x="704.5" y="107.5" width="87" height="61" rx="3" fill="#0c0c0c" stroke="#3a3a3a"/>
<path d="M705 111Q705 108 708 108H788Q791 108 791 111V126H705Z" fill="url(#mtitle)"/>
<path d="M707 108.5H789" stroke="#5a5a5a" stroke-width="1"/>
<rect x="707.5" y="127.5" width="81" height="36.5" rx="3" fill="#000" stroke="#555"/>
<text x="750" y="121.5" font-size="16.5" fill="#ffffff" stroke="#1c1c1c" stroke-width="0.4" text-anchor="middle" textLength="63.6" lengthAdjust="spacingAndGlyphs">BW Limit</text>
<text x="750" y="154.8" font-size="16.3" fill="#ffffff" stroke="#000" stroke-width="0.4" text-anchor="middle" textLength="29.3" lengthAdjust="spacingAndGlyphs">OFF</text>
<rect x="704.5" y="173.5" width="87" height="61" rx="3" fill="#0c0c0c" stroke="#3a3a3a"/>
<path d="M705 177Q705 174 708 174H788Q791 174 791 177V192H705Z" fill="url(#mtitle)"/>
<path d="M707 174.5H789" stroke="#5a5a5a" stroke-width="1"/>
<rect x="707.5" y="193.5" width="81" height="36.5" rx="3" fill="#000" stroke="#555"/>
<text x="750" y="187.5" font-size="16.5" fill="#ffffff" stroke="#1c1c1c" stroke-width="0.4" text-anchor="middle" textLength="42.2" lengthAdjust="spacingAndGlyphs">Probe</text>
<text x="750" y="220.8" font-size="16.3" fill="#ffffff" stroke="#000" stroke-width="0.4" text-anchor="middle" textLength="26.8" lengthAdjust="spacingAndGlyphs">10X</text>
<path d="M709.1 216.3L714.8 210.9V221.7Z" fill="#10c0f0"/>
<rect x="704.5" y="239.5" width="87" height="61" rx="3" fill="#0c0c0c" stroke="#3a3a3a"/>
<path d="M705 243Q705 240 708 240H788Q791 240 791 243V258H705Z" fill="url(#mtitle)"/>
<path d="M707 240.5H789" stroke="#5a5a5a" stroke-width="1"/>
<rect x="707.5" y="259.5" width="81" height="36.5" rx="3" fill="#000" stroke="#555"/>
<text x="750" y="253.5" font-size="16.5" fill="#ffffff" stroke="#1c1c1c" stroke-width="0.4" text-anchor="middle" textLength="35.5" lengthAdjust="spacingAndGlyphs">Invert</text>
<text x="750" y="286.8" font-size="16.3" fill="#ffffff" stroke="#000" stroke-width="0.4" text-anchor="middle" textLength="29.7" lengthAdjust="spacingAndGlyphs">OFF</text>
<rect x="704.5" y="305.5" width="87" height="61" rx="3" fill="#0c0c0c" stroke="#3a3a3a"/>
<path d="M705 309Q705 306 708 306H788Q791 306 791 309V324H705Z" fill="url(#mtitle)"/>
<path d="M707 306.5H789" stroke="#5a5a5a" stroke-width="1"/>
<rect x="707.5" y="325.5" width="81" height="36.5" rx="3" fill="#000" stroke="#555"/>
<text x="750" y="319.5" font-size="16.5" fill="#ffffff" stroke="#1c1c1c" stroke-width="0.4" text-anchor="middle" textLength="61.5" lengthAdjust="spacingAndGlyphs">Volts/Div</text>
<text x="750" y="352.8" font-size="16.3" fill="#ffffff" stroke="#000" stroke-width="0.4" text-anchor="middle" textLength="50.4" lengthAdjust="spacingAndGlyphs">Coarse</text>
<rect x="704.5" y="371.5" width="87" height="61" rx="3" fill="#0c0c0c" stroke="#3a3a3a"/>
<path d="M705 375Q705 372 708 372H788Q791 372 791 375V390H705Z" fill="url(#mtitle)"/>
<path d="M707 372.5H789" stroke="#5a5a5a" stroke-width="1"/>
<rect x="707.5" y="391.5" width="81" height="36.5" rx="3" fill="#000" stroke="#555"/>
<text x="750" y="385.5" font-size="16.5" fill="#ffffff" stroke="#1c1c1c" stroke-width="0.4" text-anchor="middle" textLength="27.2" lengthAdjust="spacingAndGlyphs">Unit</text>
<text x="750" y="418.8" font-size="16.3" fill="#ffffff" stroke="#000" stroke-width="0.4" text-anchor="middle" textLength="18.4" lengthAdjust="spacingAndGlyphs">[V]</text>
<path d="M709.1 414.3L714.8 408.9V419.7Z" fill="#10c0f0"/>
<circle cx="796" cy="211" r="3" fill="#c8c8c8"/><circle cx="796" cy="221" r="2" fill="#505050"/>
<rect x="60.5" y="398.5" width="127" height="54" rx="3.5" fill="#000" stroke="#5a5a5a"/>
<text x="61.8" y="411.5" font-size="12" fill="#ff00ff" textLength="20" lengthAdjust="spacingAndGlyphs">Vpp</text>
<rect x="62" y="414" width="15.3" height="15.3" rx="3" fill="url(#rgm)"/>
<text x="66.6" y="426" font-size="12" fill="#000" textLength="5.4" lengthAdjust="spacingAndGlyphs">3</text>
<path d="M81.6 425V441" stroke="#ff00ff" stroke-width="1.6"/><path d="M81.6 423L78.8 426.3H84.39999999999999Z M81.6 443L78.8 439.7H84.39999999999999Z" fill="#ff00ff"/>
<path d="M84 422.5H107M84 443.5H107" stroke="#ff00ff" stroke-width="1" stroke-dasharray="1 1"/>
<path d="M85.10 440.2 L87.90 440.2 L90.70 443 L91.60 423.6 L92.60 422.7 L94.75 425.5 L96.00 425.5 L96.90 424.25 L99.10 424.25 L99.60 425.8 L99.60 438 L100.40 439.6 L101.60 441.4 L103.80 441.4 L104.75 440.2 L106.60 442.7" stroke="#fff" stroke-width="1.1" fill="none"/>
<text x="113.6" y="411.7" font-size="12" fill="#ff00ff" textLength="21.4" lengthAdjust="spacingAndGlyphs">Cur:</text>
<path d="M136.0 408.7H141.0M138.5 406.2V408.7M136.5 411.0L138.5 408.7L140.5 411.0M141.8 408.7H146.8M144.3 406.2V408.7M142.3 411.0L144.3 408.7L146.3 411.0M147.6 408.7H152.6M150.1 406.2V408.7M148.1 411.0L150.1 408.7L152.1 411.0M153.4 408.7H158.4M155.9 406.2V408.7M153.9 411.0L155.9 408.7L157.9 411.0M159.2 408.7H164.2M161.7 406.2V408.7M159.7 411.0L161.7 408.7L163.7 411.0" stroke="#ff00ff" stroke-width="1" fill="none"/>
<text x="113.6" y="423.4" font-size="12" fill="#ff00ff" textLength="21.4" lengthAdjust="spacingAndGlyphs">Avg:</text>
<path d="M136.0 420.4H141.0M138.5 417.9V420.4M136.5 422.7L138.5 420.4L140.5 422.7M141.8 420.4H146.8M144.3 417.9V420.4M142.3 422.7L144.3 420.4L146.3 422.7M147.6 420.4H152.6M150.1 417.9V420.4M148.1 422.7L150.1 420.4L152.1 422.7M153.4 420.4H158.4M155.9 417.9V420.4M153.9 422.7L155.9 420.4L157.9 422.7M159.2 420.4H164.2M161.7 417.9V420.4M159.7 422.7L161.7 420.4L163.7 422.7" stroke="#ff00ff" stroke-width="1" fill="none"/>
<text x="113.6" y="435.09999999999997" font-size="12" fill="#ff00ff" textLength="22.5" lengthAdjust="spacingAndGlyphs">Max:</text>
<path d="M136.0 432.09999999999997H141.0M138.5 429.59999999999997V432.09999999999997M136.5 434.4L138.5 432.09999999999997L140.5 434.4M141.8 432.09999999999997H146.8M144.3 429.59999999999997V432.09999999999997M142.3 434.4L144.3 432.09999999999997L146.3 434.4M147.6 432.09999999999997H152.6M150.1 429.59999999999997V432.09999999999997M148.1 434.4L150.1 432.09999999999997L152.1 434.4M153.4 432.09999999999997H158.4M155.9 429.59999999999997V432.09999999999997M153.9 434.4L155.9 432.09999999999997L157.9 434.4M159.2 432.09999999999997H164.2M161.7 429.59999999999997V432.09999999999997M159.7 434.4L161.7 432.09999999999997L163.7 434.4" stroke="#ff00ff" stroke-width="1" fill="none"/>
<text x="113.6" y="446.79999999999995" font-size="12" fill="#ff00ff" textLength="21.4" lengthAdjust="spacingAndGlyphs">Min:</text>
<path d="M136.0 443.79999999999995H141.0M138.5 441.29999999999995V443.79999999999995M136.5 446.09999999999997L138.5 443.79999999999995L140.5 446.09999999999997M141.8 443.79999999999995H146.8M144.3 441.29999999999995V443.79999999999995M142.3 446.09999999999997L144.3 443.79999999999995L146.3 446.09999999999997M147.6 443.79999999999995H152.6M150.1 441.29999999999995V443.79999999999995M148.1 446.09999999999997L150.1 443.79999999999995L152.1 446.09999999999997M153.4 443.79999999999995H158.4M155.9 441.29999999999995V443.79999999999995M153.9 446.09999999999997L155.9 443.79999999999995L157.9 446.09999999999997M159.2 443.79999999999995H164.2M161.7 441.29999999999995V443.79999999999995M159.7 446.09999999999997L161.7 443.79999999999995L163.7 446.09999999999997" stroke="#ff00ff" stroke-width="1" fill="none"/>
<rect x="188.5" y="398.5" width="127" height="54" rx="3.5" fill="#000" stroke="#5a5a5a"/>
<text x="189.8" y="411.5" font-size="12" fill="#00ffff" textLength="20" lengthAdjust="spacingAndGlyphs">Vpp</text>
<rect x="190" y="414" width="15.3" height="15.3" rx="3" fill="url(#rgc)"/>
<text x="194.6" y="426" font-size="12" fill="#000" textLength="5.4" lengthAdjust="spacingAndGlyphs">2</text>
<path d="M209.6 425V441" stroke="#00ffff" stroke-width="1.6"/><path d="M209.6 423L206.79999999999998 426.3H212.4Z M209.6 443L206.79999999999998 439.7H212.4Z" fill="#00ffff"/>
<path d="M212 422.5H235M212 443.5H235" stroke="#00ffff" stroke-width="1" stroke-dasharray="1 1"/>
<path d="M213.10 440.2 L215.90 440.2 L218.70 443 L219.60 423.6 L220.60 422.7 L222.75 425.5 L224.00 425.5 L224.90 424.25 L227.10 424.25 L227.60 425.8 L227.60 438 L228.40 439.6 L229.60 441.4 L231.80 441.4 L232.75 440.2 L234.60 442.7" stroke="#fff" stroke-width="1.1" fill="none"/>
<text x="241.6" y="411.7" font-size="12" fill="#00ffff" textLength="61.3" lengthAdjust="spacingAndGlyphs">Cur:340mV</text>
<text x="241.6" y="423.4" font-size="12" fill="#00ffff" textLength="61.3" lengthAdjust="spacingAndGlyphs">Avg:340mV</text>
<text x="241.6" y="435.09999999999997" font-size="12" fill="#00ffff" textLength="61.3" lengthAdjust="spacingAndGlyphs">Max:340mV</text>
<text x="241.6" y="446.79999999999995" font-size="12" fill="#00ffff" textLength="61.3" lengthAdjust="spacingAndGlyphs">Min:340mV</text>
<path d="M0 454H112.5L99.5 480H-13Z" fill="url(#hatch1)"/>
<path d="M30.3 456.2H109.4L98.6 477.5H19.6Z" fill="#000"/>
<path d="M6.3 465L11 460.5V474.7" stroke="#8c8c8c" stroke-width="2.1" fill="none"/>
<path d="M31.5 462.5H39" stroke="#8c8c8c" stroke-width="1"/><path d="M32 466.5H39" stroke="#8c8c8c" stroke-width="1" stroke-dasharray="1 1"/>
<text x="53" y="471.7" font-size="12" fill="#8c8c8c" textLength="33.3" lengthAdjust="spacingAndGlyphs">2.00 V</text>
<path d="M116.9 454H229.4L216.4 480H103.9Z" fill="#00ffff"/>
<path d="M147.20000000000002 456.2H226.3L215.5 477.5H136.5Z" fill="#000"/>
<text x="121.0" y="474.6" font-size="20.5" fill="#000" textLength="9.5" lengthAdjust="spacingAndGlyphs">2</text>
<path d="M148.4 462.5H155.9" stroke="#00ffff" stroke-width="1"/><path d="M148.9 466.5H155.9" stroke="#00ffff" stroke-width="1" stroke-dasharray="1 1"/>
<text x="168.5" y="471.7" font-size="12" fill="#00ffff" textLength="38.5" lengthAdjust="spacingAndGlyphs">100mV</text>
<path d="M233 454H345.5L332.5 480H220Z" fill="url(#hatch3)"/>
<path d="M263.3 456.2H342.4L331.6 477.5H252.6Z" fill="#000"/>
<text x="238.9" y="474.6" font-size="20.5" fill="#8c8c8c" textLength="9.5" lengthAdjust="spacingAndGlyphs">3</text>
<path d="M264.5 462.5H272" stroke="#8c8c8c" stroke-width="1"/><path d="M265 466.5H272" stroke="#8c8c8c" stroke-width="1" stroke-dasharray="1 1"/>
<text x="285.6" y="471.7" font-size="12" fill="#8c8c8c" textLength="38.4" lengthAdjust="spacingAndGlyphs">200mV</text>
<path d="M350 454H462.5L449.5 480H337Z" fill="url(#hatch4)"/>
<path d="M380.3 456.2H459.4L448.6 477.5H369.6Z" fill="#000"/>
<text x="355.3" y="474.6" font-size="20.5" fill="#8c8c8c" textLength="9.5" lengthAdjust="spacingAndGlyphs">4</text>
<path d="M381.5 462.5H389" stroke="#8c8c8c" stroke-width="1"/><path d="M382 466.5H389" stroke="#8c8c8c" stroke-width="1" stroke-dasharray="1 1"/>
<text x="402" y="471.7" font-size="12" fill="#8c8c8c" textLength="39.6" lengthAdjust="spacingAndGlyphs">200mV</text>
<path d="M700.2 480L713 454.5H800" fill="none" stroke="#6a6a6a" stroke-width="1"/>
<circle cx="741.8" cy="466.2" r="2.1" fill="#f0f0f0"/><path d="M742 466.2H758.5" stroke="#f0f0f0" stroke-width="1.3"/><circle cx="759" cy="466.2" r="1.4" fill="#f0f0f0"/>
<path d="M744.8 466.2Q747 462.6 750 462.3H753M745.5 466.2Q748 470.4 751 470.5H754" stroke="#f0f0f0" stroke-width="1.1" fill="none"/><circle cx="753.3" cy="462.2" r="1.6" fill="#f0f0f0"/><circle cx="754.6" cy="470.5" r="1.9" fill="#f0f0f0"/>
<path d="M765.8 466.2L772.6 458H775.2V472.4H772.6Z" fill="none" stroke="#f0f0f0" stroke-width="1.8" stroke-linejoin="round"/>
<path d="M772.4 458.5V472M772.6 464.6A1.6 1.6 0 0 1 772.6 467.8" stroke="#f0f0f0" stroke-width="1" fill="none"/>
<path d="M777.3 462.4L780.7 459.3M777.3 466.2H782M777.3 468.4L780.7 471.5" stroke="#f0f0f0" stroke-width="0.9"/>
</svg>
</body></html>
